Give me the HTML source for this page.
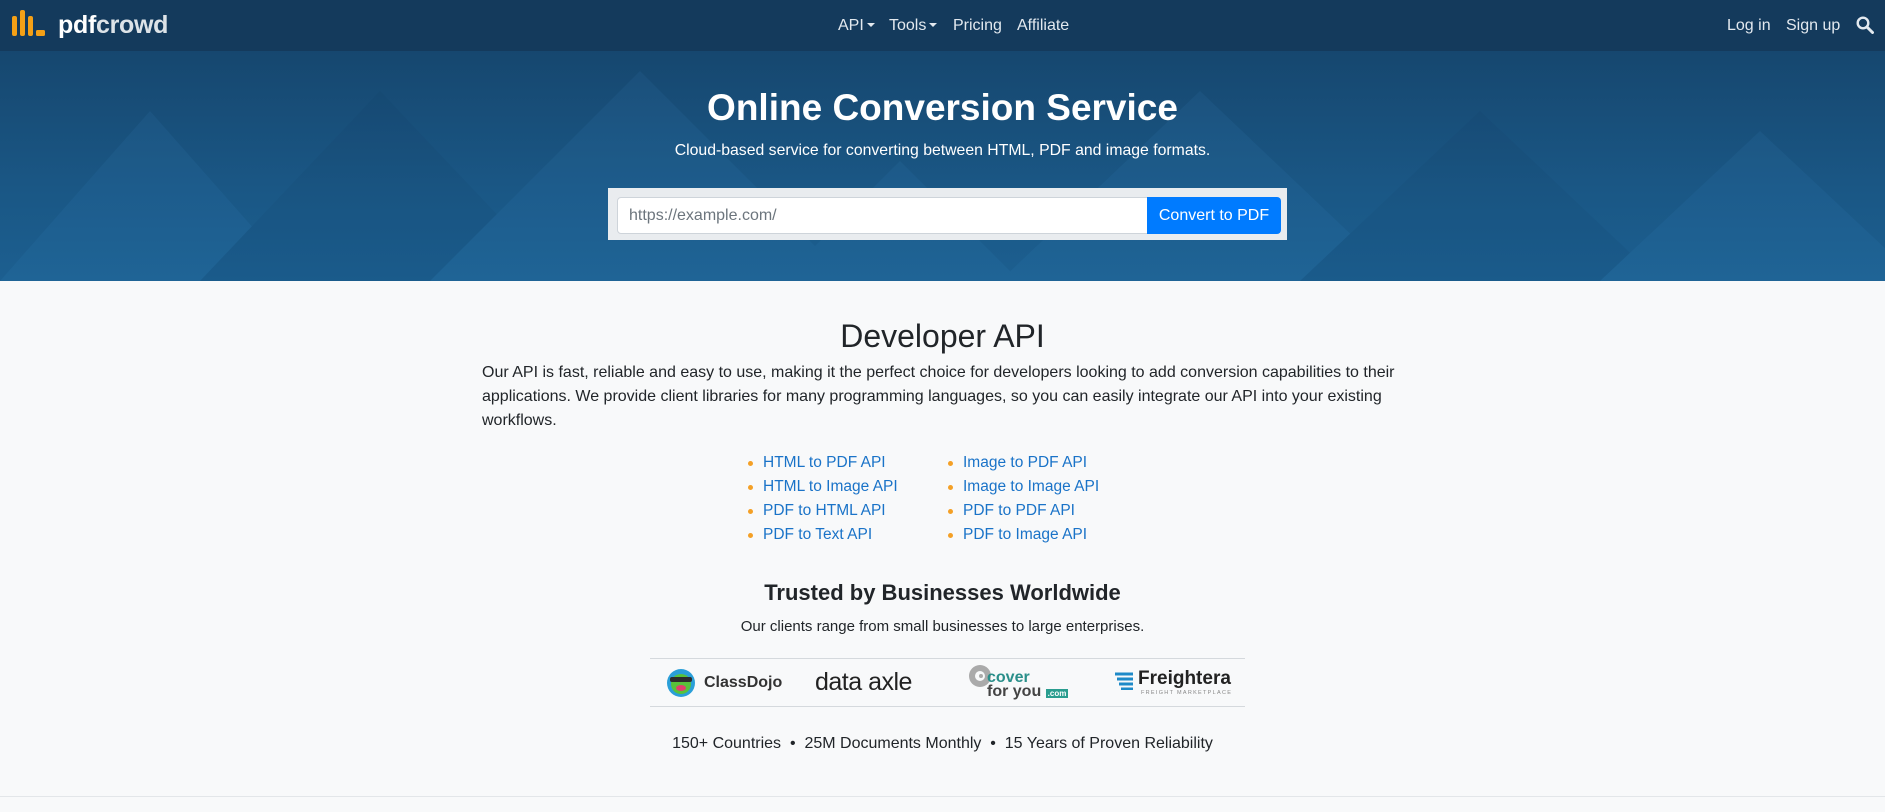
<!DOCTYPE html>
<html><head><meta charset="utf-8">
<style>
*{box-sizing:border-box;margin:0;padding:0}
body{width:1885px;height:812px;overflow:hidden;background:#f8f9fa;font-family:"Liberation Sans",sans-serif;color:#212529;position:relative}
.nav{position:absolute;left:0;top:0;width:1885px;height:51px;background:#143a5c;color:#e3e9ef;font-size:16px}
.nav span{position:absolute;top:17px;white-space:nowrap}
.caret{display:inline-block;width:0;height:0;border-left:4px solid transparent;border-right:4px solid transparent;border-top:4px solid #e3e9ef;vertical-align:3px;margin-left:3px}
.hero{position:absolute;left:0;top:51px;width:1885px;height:230px;background:linear-gradient(180deg,#16476f 0%,#1a5785 60%,#1c5f90 100%);overflow:hidden}
.hero h1{position:absolute;top:36px;width:100%;text-align:center;color:#fff;font-size:37px;font-weight:bold}
.hero p{position:absolute;top:91px;width:100%;text-align:center;color:#fff;font-size:15.8px}
.box{position:absolute;left:608px;top:137px;width:679px;height:52px;background:#e9ecef}
.inp{position:absolute;left:9px;top:9px;width:531px;height:37px;background:#fff;border:1px solid #ced4da;border-radius:4px 0 0 4px;color:#6c757d;font-size:16px;padding:9px 11px}
.btn{position:absolute;left:539px;top:9px;width:134px;height:37px;background:#007bff;color:#fff;border-radius:0 4px 4px 0;font-size:16px;text-align:center;line-height:37px}
h2{position:absolute;top:318px;width:100%;text-align:center;font-size:32px;font-weight:normal;color:#212529}
.para{position:absolute;left:482px;top:361px;width:925px;font-size:16px;line-height:24px}
ul{position:absolute;list-style:none;font-size:15.5px;line-height:24px}
li{position:relative;color:#1a73c8}
li:before{content:"";position:absolute;left:-15px;top:10px;width:5px;height:5px;border-radius:50%;background:#f4a026}
h3{position:absolute;top:580px;width:100%;text-align:center;font-size:22px;font-weight:bold;color:#212529}
.sub{position:absolute;top:618px;width:100%;text-align:center;font-size:15px}
.logos{position:absolute;left:650px;top:658px;width:595px;height:49px;border-top:1px solid #d5d9dd;border-bottom:1px solid #d5d9dd}
.stats{position:absolute;top:735px;width:100%;text-align:center;font-size:16px}
.bline{position:absolute;left:0;top:796px;width:1885px;height:1px;background:#e3e6e9}
</style></head><body>
<div class="nav">
 <svg style="position:absolute;left:12px;top:10px" width="40" height="28" viewBox="0 0 40 28"><rect x="0" y="6" width="5" height="20" rx="2" fill="#f4a016"/><rect x="8" y="0" width="5" height="26" rx="2" fill="#f4a016"/><rect x="16" y="6" width="5" height="20" rx="2" fill="#f4a016"/><rect x="24" y="20" width="9" height="6" rx="1.5" fill="#f4a016"/></svg>
 <span style="left:58px;top:11px;font-size:25px;font-weight:bold;color:#fff;letter-spacing:-0.3px">pdf<span style="position:static;color:#dde3e8">crowd</span></span>
 <span style="left:838px">API<i class="caret"></i></span>
 <span style="left:889px">Tools<i class="caret"></i></span>
 <span style="left:953px">Pricing</span>
 <span style="left:1017px">Affiliate</span>
 <span style="left:1727px">Log in</span>
 <span style="left:1786px">Sign up</span>
 <svg style="position:absolute;left:1856px;top:16px" width="18" height="18" viewBox="0 0 18 18"><circle cx="7" cy="7" r="5.3" stroke="#e3e9ef" stroke-width="2.4" fill="none"/><path d="M11 11L16.5 16.5" stroke="#e3e9ef" stroke-width="3" stroke-linecap="round"/></svg>
</div>
<div class="hero">
 <svg width="1885" height="230" style="position:absolute;left:0;top:0" opacity="0.08">
  <polygon points="0,230 150,60 300,230" fill="#4a9ee0"/>
  <polygon points="200,230 380,40 560,230" fill="#0e3559"/>
  <polygon points="430,230 640,20 850,230" fill="#4a9ee0"/>
  <polygon points="780,230 900,110 1020,230" fill="#4a9ee0"/>
  <polygon points="1000,230 1200,40 1400,230" fill="#4a9ee0"/>
  <polygon points="1300,230 1480,60 1660,230" fill="#0e3559"/>
  <polygon points="1600,230 1760,80 1920,230" fill="#4a9ee0"/>
 </svg>
 <h1>Online Conversion Service</h1>
 <p>Cloud-based service for converting between HTML, PDF and image formats.</p>
 <div class="box"><div class="inp">https://example.com/</div><div class="btn">Convert to PDF</div></div>
</div>
<h2>Developer API</h2>
<div class="para">Our API is fast, reliable and easy to use, making it the perfect choice for developers looking to add conversion capabilities to their applications. We provide client libraries for many programming languages, so you can easily integrate our API into your existing workflows.</div>
<ul style="left:763px;top:451px"><li>HTML to PDF API</li><li>HTML to Image API</li><li>PDF to HTML API</li><li>PDF to Text API</li></ul>
<ul style="left:963px;top:451px"><li>Image to PDF API</li><li>Image to Image API</li><li>PDF to PDF API</li><li>PDF to Image API</li></ul>
<h3>Trusted by Businesses Worldwide</h3>
<div class="sub">Our clients range from small businesses to large enterprises.</div>
<div class="logos">
 <svg style="position:absolute;left:17px;top:10px" width="28" height="28"><circle cx="14" cy="14" r="14" fill="#2a9fd8"/><circle cx="14" cy="15" r="10" fill="#58c23a"/><rect x="3" y="8" width="22" height="5" rx="2" fill="#2c2c2c"/><ellipse cx="14" cy="19" rx="5" ry="3" fill="#e0406e"/></svg>
 <span style="position:absolute;left:54px;top:15px;font-size:16px;font-weight:bold;color:#333">ClassDojo</span>
 <span style="position:absolute;left:165px;top:9px;font-size:25px;color:#222;letter-spacing:-0.5px">data axle</span>
 <svg style="position:absolute;left:318px;top:5px" width="24" height="24"><circle cx="12" cy="12" r="11" fill="#aaa"/><circle cx="12" cy="12" r="5" fill="#f8f9fa"/><circle cx="13" cy="12" r="2" fill="#aaa"/></svg>
 <span style="position:absolute;left:337px;top:12px;font-size:16px;font-weight:bold;color:#2a8f8a;line-height:14px">cover</span>
 <span style="position:absolute;left:337px;top:26px;font-size:16px;font-weight:bold;color:#444;line-height:14px">for you <span style="font-size:8px;background:#2a9d8f;color:#fff;padding:0 2px">.com</span></span>
 <svg style="position:absolute;left:465px;top:13px" width="20" height="18"><path d="M0 2H18M2 7H18M4 12H18M6 17H18" stroke="#1e8ac8" stroke-width="3"/></svg>
 <span style="position:absolute;left:488px;top:9px;font-size:19px;font-weight:bold;color:#222">Freightera</span>
 <span style="position:absolute;left:491px;top:31px;font-size:5.5px;color:#888;letter-spacing:1.3px">FREIGHT MARKETPLACE</span>
</div>
<div class="stats">150+ Countries &nbsp;•&nbsp; 25M Documents Monthly &nbsp;•&nbsp; 15 Years of Proven Reliability</div>
<div class="bline"></div>
</body></html>
